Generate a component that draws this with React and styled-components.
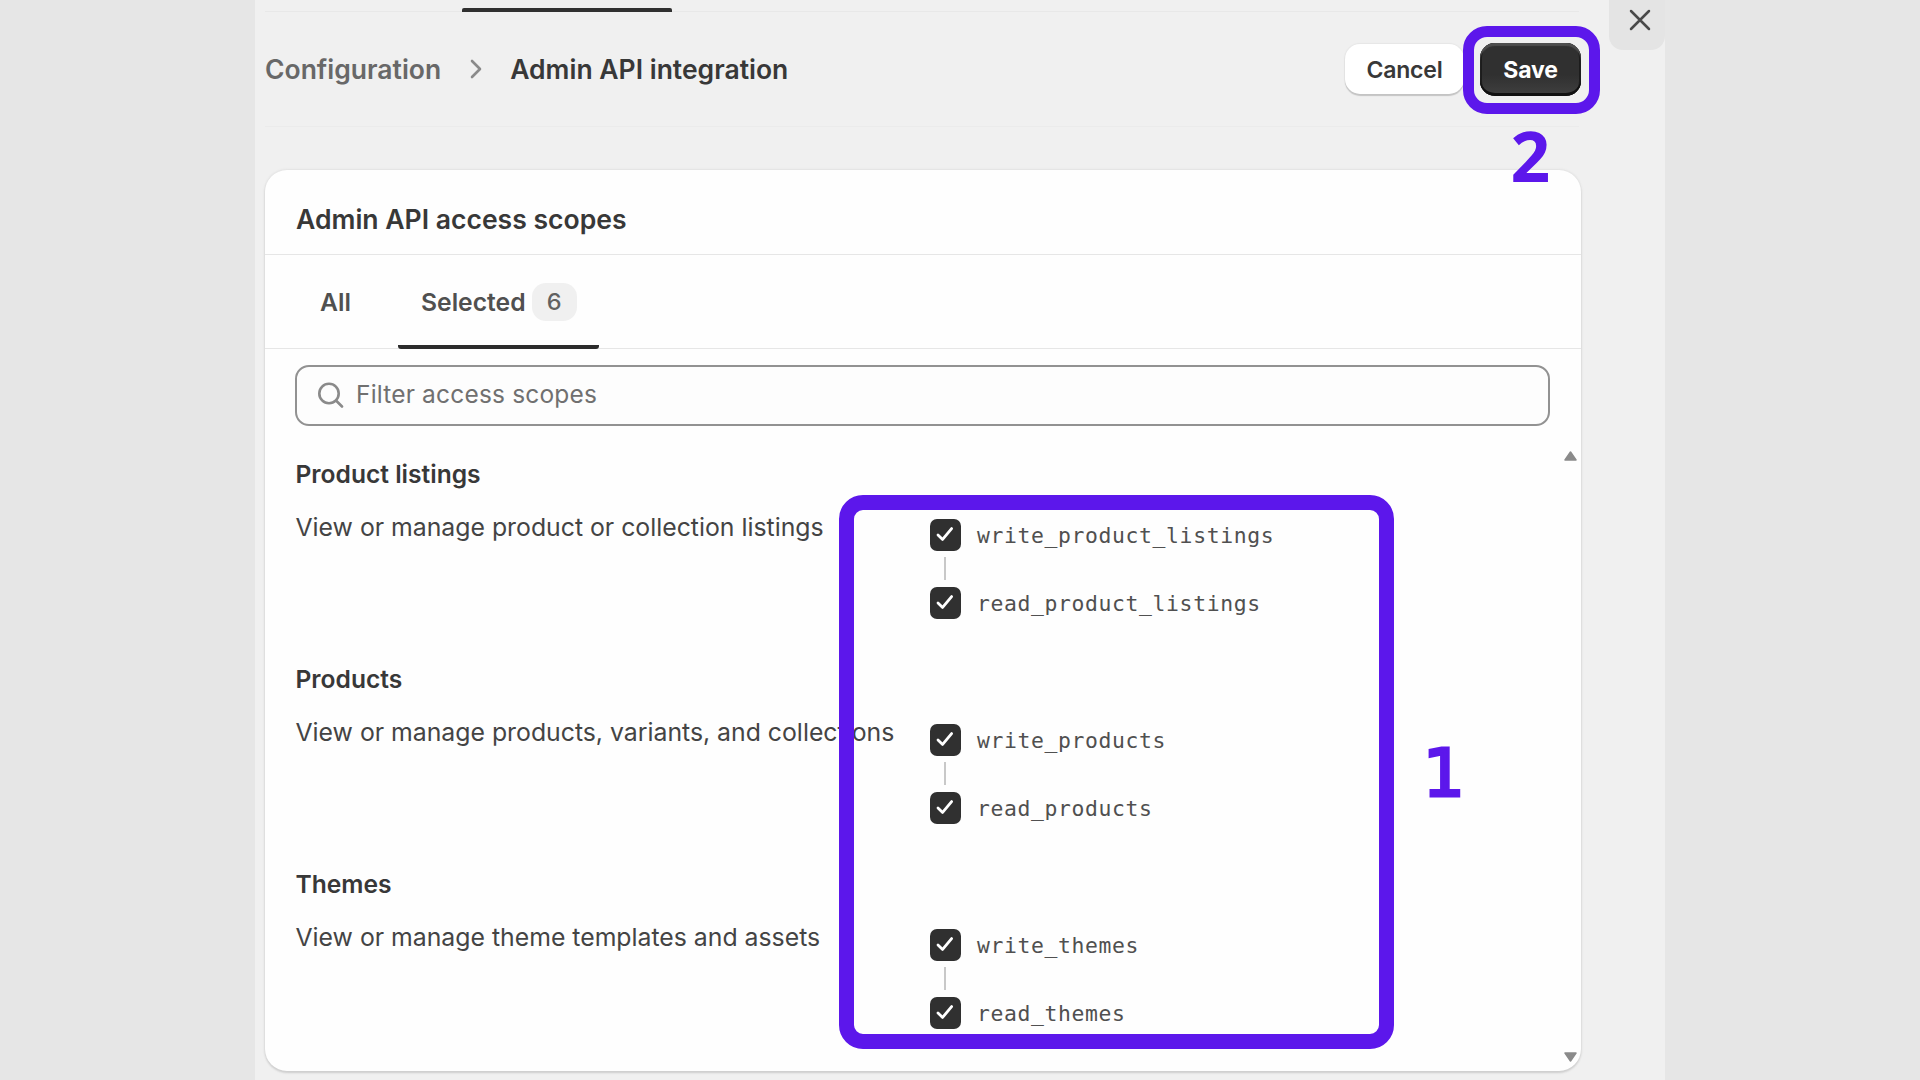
import React from "react";
import styled, { createGlobalStyle } from "styled-components";

const GlobalStyle = createGlobalStyle`
  * { box-sizing: border-box; }
  body { margin: 0; background: #e6e6e6; overflow: hidden; }
  h1, h2, h3, p { margin: 0; }
  button { font: inherit; border: 0; padding: 0; }
`;

const ACCENT = "#5c17eb";

const Page = styled.div`
  position: relative;
  width: 1920px;
  height: 1080px;
  padding: 0 255px;
  display: flex;
  overflow: hidden;
  background: #e6e6e6;
  font-family: Inter, "Liberation Sans", sans-serif;
  color: #383838;
`;

const Panel = styled.div`
  flex: 1;
  display: flex;
  justify-content: space-between;
  align-items: flex-start;
  padding-left: 10px;
  background: #f0f0f0;
`;

const Main = styled.main`
  width: 1316px;
  display: flex;
  flex-direction: column;
`;

const TabStrip = styled.div`
  width: 1314px;
  height: 12px;
  padding-left: 197px;
  display: flex;
  align-items: flex-end;
  border-bottom: 1px solid #e8e8e8;
`;

const ActiveTabBar = styled.div`
  width: 210px;
  height: 4px;
  margin-bottom: -1px;
  border-radius: 2px 2px 0 0;
  background: #303030;
`;

const Toolbar = styled.header`
  width: 1314px;
  height: 115px;
  display: flex;
  align-items: center;
  justify-content: space-between;
  border-bottom: 1px solid #ebebeb;
`;

const Breadcrumb = styled.nav`
  display: flex;
  align-items: center;
`;

const Crumb = styled.span`
  font-size: 26.5px;
  line-height: 32px;
  font-weight: 600;
  color: ${(p) => (p.$current ? "#383838" : "#686868")};
  white-space: nowrap;
`;

const Chevron = styled.svg`
  width: 12px;
  height: 20px;
  margin: 0 28px 0 29px;
`;

const Actions = styled.div`
  display: flex;
  gap: 16px;
  margin-right: -2px;
`;

const Button = styled.button`
  height: ${(p) => (p.$primary ? 53 : 50)}px;
  width: ${(p) => (p.$primary ? 101 : 119)}px;
  align-self: center;
  border-radius: 15px;
  font-size: 23px;
  line-height: 50px;
  padding-top: 1px;
  font-weight: ${(p) => (p.$primary ? 700 : 600)};
  letter-spacing: -0.2px;
  color: ${(p) => (p.$primary ? "#fff" : "#383838")};
  background: ${(p) => (p.$primary ? "linear-gradient(#303030 60%, #404040)" : "#fff")};
  box-shadow: ${(p) =>
    p.$primary
      ? "inset 0 3px 1px #4e4e4e, inset 0 -3px 0 #111, inset 2px 0 0 #1c1c1c, inset -2px 0 0 #1c1c1c"
      : "0 2px 1px #c4c4c4, 0 0 1px 1px #e6e6e6"};
`;

const CloseTab = styled.button`
  width: 56px;
  height: 50px;
  display: flex;
  padding: 9px 0 0 20px;
  border-radius: 0 0 14px 14px;
  background: #e4e4e4;
`;

const Card = styled.section`
  width: 1316px;
  height: 901px;
  margin-top: 43px;
  display: flex;
  flex-direction: column;
  border-radius: 22px;
  background: #fefefe;
  box-shadow: 0 2px 2px #cfcfcf, 0 0 2px 1px #e2e2e2;
`;

const CardTitle = styled.h2`
  height: 85px;
  padding: 15px 31px 0;
  border-bottom: 1px solid #e6e6e6;
  font-size: 26.55px;
  line-height: 69px;
  font-weight: 600;
`;

const Tabs = styled.div`
  height: 94px;
  padding-left: 32px;
  display: flex;
  border-bottom: 1px solid #e6e6e6;
`;

const Tab = styled.div`
  height: 94px;
  width: ${(p) => p.$width}px;
  padding-left: 23px;
  display: flex;
  align-items: center;
  gap: 6px;
  border-bottom: ${(p) => (p.$active ? "4px solid #2b2b2b" : "0")};
  padding-top: ${(p) => (p.$active ? 4 : 0)}px;
  border-radius: 3px;
  font-size: 24.7px;
  font-weight: 600;
  color: #505050;
`;

const Badge = styled.span`
  width: 45px;
  height: 38px;
  border-radius: 14px;
  background: #f0f0f0;
  color: #616161;
  text-align: center;
  font-size: 23.5px;
  line-height: 38px;
  font-weight: 500;
`;

const Search = styled.div`
  width: 1255px;
  height: 61px;
  margin: 16px 0 0 30px;
  padding-left: 20px;
  display: flex;
  align-items: center;
  gap: 12px;
  border: 2px solid #929292;
  border-radius: 14px;
  background: #fdfdfd;
  color: #707070;
  font-size: 24.5px;
  line-height: 55px;
  padding-bottom: 2px;
  letter-spacing: 0.18px;
`;

const ScopeArea = styled.div`
  flex: 1;
  min-height: 0;
  display: flex;
  justify-content: space-between;
`;

const ScopeList = styled.div`
  padding: 33px 0 0 30px;
`;

const ScopeGroup = styled.div`
  height: 205px;
  display: grid;
  grid-template-columns: 635px 400px;
`;

const GroupText = styled.div`
  display: flex;
  flex-direction: column;
  gap: 23px;
  padding-left: 0.5px;
  white-space: nowrap;
  font-size: 24.8px;
  line-height: 30px;
  color: #444;
`;

const GroupTitle = styled.h3`
  font-size: 24.6px;
  line-height: 30px;
  font-weight: 600;
  color: #383838;
`;

const Scopes = styled.div`
  padding-top: 60px;
`;

const ScopeRow = styled.div`
  height: 32px;
  display: flex;
  align-items: center;
  gap: 16px;
`;

const Check = styled.span`
  width: 31px;
  height: 32px;
  display: flex;
  align-items: center;
  justify-content: center;
  border-radius: 7px;
  background: #303030;
`;

const Connector = styled.div`
  width: 1.5px;
  height: 23px;
  margin: 6px 0 7px 14px;
  background: #c8c8c8;
`;

const ScopeName = styled.code`
  padding-top: 2px;
  font-family: "DejaVu Sans Mono", monospace;
  font-size: 21.4px;
  line-height: 32px;
  letter-spacing: 0.63px;
  color: #505050;
`;

const ScrollRail = styled.div`
  width: 13px;
  margin: 25px 4px 9px 0;
  display: flex;
  flex-direction: column;
  justify-content: space-between;
`;

const Frame = styled.div`
  position: absolute;
  left: ${(p) => p.$x}px;
  top: ${(p) => p.$y}px;
  width: ${(p) => p.$w}px;
  height: ${(p) => p.$h}px;
  border: ${(p) => p.$line}px solid ${ACCENT};
  border-radius: 24px;
`;

const StepNumber = styled.div`
  position: absolute;
  left: ${(p) => p.$x}px;
  top: ${(p) => p.$y}px;
  font-family: ${(p) => p.$font}, sans-serif;
  font-size: ${(p) => p.$size}px;
  line-height: 76px;
  font-weight: ${(p) => p.$weight};
  color: ${ACCENT};
  -webkit-text-stroke: ${(p) => p.$stroke}px ${ACCENT};
`;

const groups = [
  {
    title: "Product listings",
    text: "View or manage product or collection listings",
    scopes: ["write_product_listings", "read_product_listings"],
  },
  {
    title: "Products",
    text: "View or manage products, variants, and collections",
    scopes: ["write_products", "read_products"],
  },
  {
    title: "Themes",
    text: "View or manage theme templates and assets",
    scopes: ["write_themes", "read_themes"],
  },
];

function Scope({ name }) {
  return (
    <ScopeRow>
      <Check>
        <svg width="19" height="18" viewBox="0 0 19 18" fill="none">
          <path d="M2 9 L6.6 13.4 L15.6 2.6" stroke="#fff" strokeWidth="2.8" strokeLinecap="round" strokeLinejoin="round" />
        </svg>
      </Check>
      <ScopeName>{name}</ScopeName>
    </ScopeRow>
  );
}

export default function App() {
  return (
    <Page>
      <GlobalStyle />
      <Panel>
        <Main>
          <TabStrip>
            <ActiveTabBar />
          </TabStrip>
          <Toolbar>
            <Breadcrumb>
              <Crumb>Configuration</Crumb>
              <Chevron viewBox="0 0 12 20" fill="none">
                <path d="M2 2 L10 10 L2 18" stroke="#8a8a8a" strokeWidth="2.6" strokeLinecap="round" strokeLinejoin="round" />
              </Chevron>
              <Crumb $current>Admin API integration</Crumb>
            </Breadcrumb>
            <Actions>
              <Button>Cancel</Button>
              <Button $primary>Save</Button>
            </Actions>
          </Toolbar>
          <Card>
            <CardTitle>Admin API access scopes</CardTitle>
            <Tabs>
              <Tab $width={101}>All</Tab>
              <Tab $active $width={201}>
                Selected <Badge>6</Badge>
              </Tab>
            </Tabs>
            <Search>
              <svg width="27" height="27" viewBox="0 0 27 27" fill="none" stroke="#8a8a8a" strokeWidth="2.6" strokeLinecap="round">
                <circle cx="12" cy="12.5" r="9.7" />
                <path d="M19 19.5 L25 25.5" />
              </svg>
              Filter access scopes
            </Search>
            <ScopeArea>
              <ScopeList>
                {groups.map((group) => (
                  <ScopeGroup key={group.title}>
                    <GroupText>
                      <GroupTitle>{group.title}</GroupTitle>
                      <p>{group.text}</p>
                    </GroupText>
                    <Scopes>
                      <Scope name={group.scopes[0]} />
                      <Connector />
                      <Scope name={group.scopes[1]} />
                    </Scopes>
                  </ScopeGroup>
                ))}
              </ScopeList>
              <ScrollRail>
                <svg width="13" height="10" viewBox="0 0 13 10">
                  <path d="M6.5 1 L12 9 H1 Z" fill="#8a8a8a" stroke="#8a8a8a" strokeWidth="1.5" strokeLinejoin="round" />
                </svg>
                <svg width="13" height="10" viewBox="0 0 13 10">
                  <path d="M6.5 9 L12 1 H1 Z" fill="#8a8a8a" stroke="#8a8a8a" strokeWidth="1.5" strokeLinejoin="round" />
                </svg>
              </ScrollRail>
            </ScopeArea>
          </Card>
        </Main>
        <CloseTab aria-label="Close">
          <svg width="22" height="22" viewBox="0 0 22 22" fill="none">
            <path d="M2 2 L20 20 M20 2 L2 20" stroke="#4a4a4a" strokeWidth="2.5" strokeLinecap="round" />
          </svg>
        </CloseTab>
      </Panel>
      <Frame $x={1463} $y={26} $w={137} $h={88} $line={11.5} />
      <Frame $x={839} $y={494.5} $w={555} $h={554.5} $line={15} />
      <StepNumber $font='"Noto Sans"' $size={69.5} $weight={700} $stroke={0} $x={1510.5} $y={117}>2</StepNumber>
      <StepNumber $font='"DejaVu Sans"' $size={65.5} $weight={400} $stroke={3.2} $x={1423} $y={735}>1</StepNumber>
    </Page>
  );
}
